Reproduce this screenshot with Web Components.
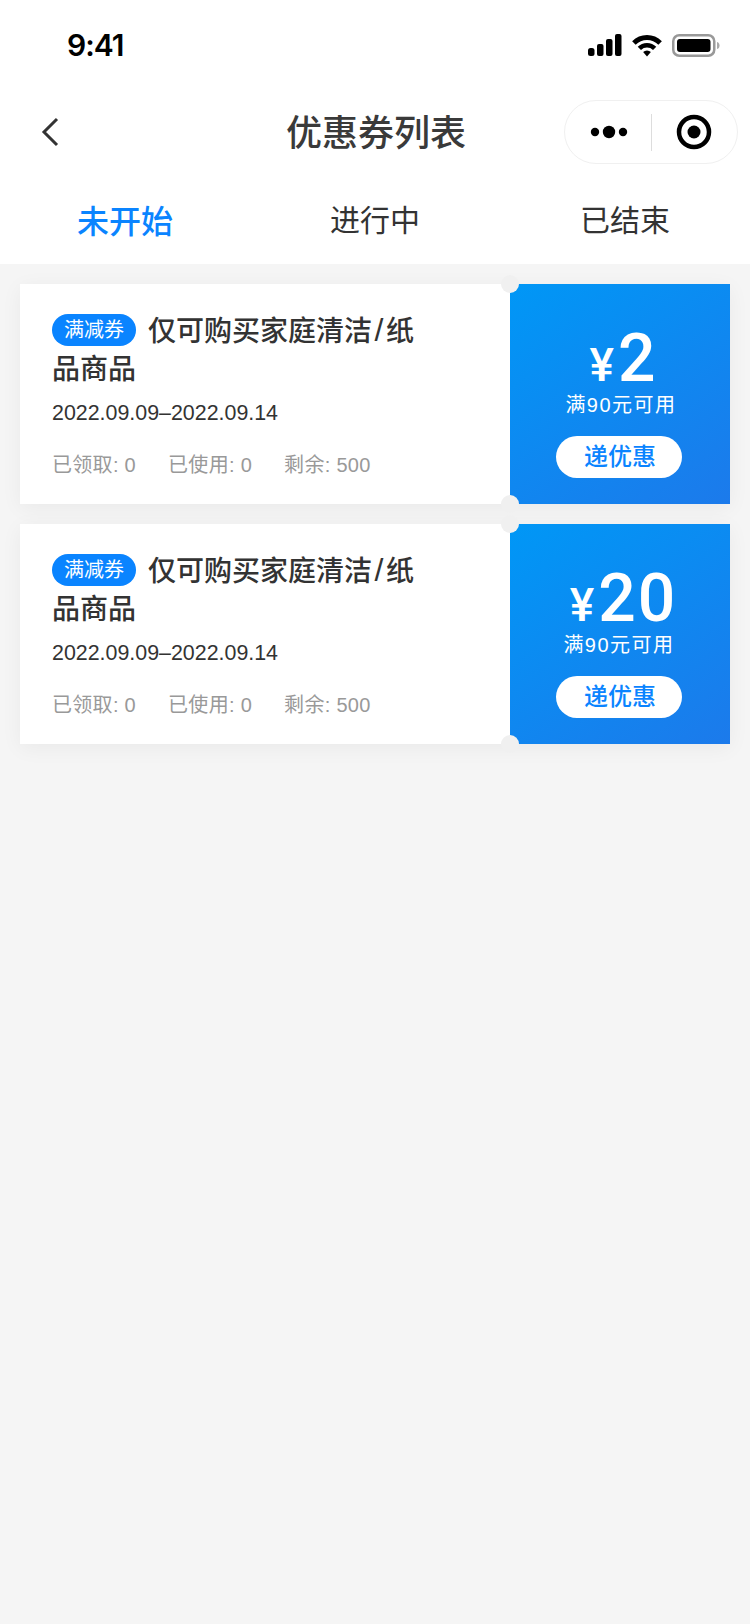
<!DOCTYPE html>
<html lang="zh">
<head>
<meta charset="utf-8">
<title>优惠券列表</title>
<style>
    html, body {
        margin: 0;
        background: #f5f5f5;
    }
    body {
        font-family: "Liberation Sans", "Noto Sans CJK SC", sans-serif;
        color: #333;
    }
    .slash {
        font-size: 32px;
        line-height: 0;
        padding: 0 2.5px;
    }
</style>
</head>
<body>
<coupon-page>
    <status-bar time="9:41"></status-bar>
    <nav-bar>优惠券列表</nav-bar>
    <tab-bar>
        <tab-item active>未开始</tab-item>
        <tab-item>进行中</tab-item>
        <tab-item>已结束</tab-item>
    </tab-bar>
    <coupon-list>
        <coupon-card tag="满减券" date="2022.09.09–2022.09.14" amount="2" rule="满90元可用" received="0" used="0" left="500">仅可购买家庭清洁<span class="slash">/</span>纸品商品</coupon-card>
        <coupon-card tag="满减券" date="2022.09.09–2022.09.14" amount="20" rule="满90元可用" received="0" used="0" left="500" shift="-4">仅可购买家庭清洁<span class="slash">/</span>纸品商品</coupon-card>
    </coupon-list>
</coupon-page>

<script>
class CouponPage extends HTMLElement {
    constructor() {
        super();
        this.attachShadow({ mode: 'open' });
        this.shadowRoot.innerHTML = `
            <style>
                :host {
                    display: flex;
                    flex-direction: column;
                    min-height: 1624px;
                    background: #f5f5f5;
                }
            </style>
            <slot></slot>
        `;
    }
}

class StatusBar extends HTMLElement {
    constructor() {
        super();
        this.attachShadow({ mode: 'open' });
        this.shadowRoot.innerHTML = `
            <style>
                :host {
                    display: flex;
                    justify-content: space-between;
                    align-items: center;
                    height: 88px;
                    padding: 2px 30px 0 67px;
                    box-sizing: border-box;
                    background: #fff;
                }
                .time {
                    font: 600 30px/1 Inter, sans-serif;
                    letter-spacing: -1px;
                    color: #000;
                }
                .icons {
                    display: flex;
                    align-items: center;
                    gap: 10px;
                }
                svg { display: block; }
            </style>
            <span class="time">${this.getAttribute('time')}</span>
            <div class="icons">
                <svg width="34" height="22" viewBox="0 0 34 22" fill="#000">
                    <rect x="0" y="14" width="6.5" height="8" rx="2.5"/>
                    <rect x="9" y="10" width="6.5" height="12" rx="2"/>
                    <rect x="18" y="5" width="6.5" height="17" rx="2"/>
                    <rect x="27" y="0" width="6.5" height="22" rx="2"/>
                </svg>
                <svg width="30" height="23" viewBox="0 0 30 23" fill="none" stroke="#000">
                    <path d="M1.9 8.9 A18.5 18.5 0 0 1 28.1 8.9" stroke-width="5"/>
                    <path d="M7.36 14.36 A10.8 10.8 0 0 1 22.64 14.36" stroke-width="4.6"/>
                    <path d="M15 22.5 L11.11 18.11 A5.5 5.5 0 0 1 18.89 18.11 Z" fill="#000" stroke="none"/>
                </svg>
                <svg width="48" height="23" viewBox="0 0 48 23">
                    <rect x="1.25" y="1.25" width="41" height="20.5" rx="6" fill="none" stroke="#999" stroke-width="2.5"/>
                    <rect x="5" y="5" width="33.5" height="13" rx="3" fill="#000"/>
                    <path d="M45 8 C47 8.500 47.500 10 47.500 11.500 C47.500 13 47 14.500 45 15 Z" fill="#aaa"/>
                </svg>
            </div>
        `;
    }
}

class NavBar extends HTMLElement {
    constructor() {
        super();
        this.attachShadow({ mode: 'open' });
        this.shadowRoot.innerHTML = `
            <style>
                :host {
                    display: grid;
                    grid-template-columns: 174px 1fr 174px;
                    align-items: center;
                    justify-items: center;
                    height: 88px;
                    padding: 0 12px;
                    box-sizing: border-box;
                    background: #fff;
                }
                .title {
                    font: 500 36px/1.2 "Noto Sans CJK SC", sans-serif;
                    color: #3a3a3a;
                    position: relative;
                    top: -1px;
                    left: 1px;
                }
                .back { justify-self: start; margin-left: 28px; }
                .capsule {
                    justify-self: end;
                    display: flex;
                    align-items: center;
                    width: 174px;
                    height: 64px;
                    box-sizing: border-box;
                    border: 1px solid #f0f0f0;
                    border-radius: 32px;
                }
                .capsule > div {
                    flex: 1;
                    display: flex;
                    justify-content: center;
                    align-items: center;
                }
                .more { border-right: 1px solid #ddd; height: 37px; }
                .more svg { margin-left: 3px; }
                svg { display: block; }
            </style>
            <svg class="back" width="20" height="30" viewBox="0 0 20 30" fill="none" stroke="#333" stroke-width="3">
                <path d="M17 2 L4 15 L17 28"/>
            </svg>
            <span class="title"><slot></slot></span>
            <div class="capsule">
                <div class="more">
                    <svg width="40" height="14" viewBox="0 0 40 14" fill="#000">
                        <circle cx="6" cy="7" r="4.200"/>
                        <circle cx="20" cy="7" r="6.200"/>
                        <circle cx="34" cy="7" r="4.200"/>
                    </svg>
                </div>
                <div>
                    <svg width="36" height="36" viewBox="0 0 36 36">
                        <circle cx="18" cy="18" r="15" fill="none" stroke="#000" stroke-width="4.500"/>
                        <circle cx="18" cy="18" r="6.500" fill="#000"/>
                    </svg>
                </div>
            </div>
        `;
    }
}

class TabBar extends HTMLElement {
    constructor() {
        super();
        this.attachShadow({ mode: 'open' });
        this.shadowRoot.innerHTML = `
            <style>
                :host {
                    display: grid;
                    grid-template-columns: repeat(3, 1fr);
                    height: 88px;
                    background: #fff;
                }
            </style>
            <slot></slot>
        `;
    }
}

class TabItem extends HTMLElement {
    constructor() {
        super();
        this.attachShadow({ mode: 'open' });
        this.shadowRoot.innerHTML = `
            <style>
                :host {
                    display: flex;
                    justify-content: center;
                    align-items: center;
                    padding-bottom: 4px;
                    font: 30px/1.2 "Noto Sans CJK SC", sans-serif;
                    color: #333;
                }
                :host([active]) {
                    padding-bottom: 2px;
                    font-size: 32px;
                    font-weight: 500;
                    color: #0a84ff;
                }
            </style>
            <slot></slot>
        `;
    }
}

class CouponList extends HTMLElement {
    constructor() {
        super();
        this.attachShadow({ mode: 'open' });
        this.shadowRoot.innerHTML = `
            <style>
                :host {
                    display: flex;
                    flex-direction: column;
                    gap: 20px;
                    padding: 20px;
                }
            </style>
            <slot></slot>
        `;
    }
}

class CouponCard extends HTMLElement {
    constructor() {
        super();
        this.attachShadow({ mode: 'open' });
        const attr = name => this.getAttribute(name);
        this.shadowRoot.innerHTML = `
            <style>
                :host {
                    display: grid;
                    grid-template-columns: 490px 220px;
                    height: 220px;
                    position: relative;
                    box-shadow: 0 4px 20px rgba(0, 0, 0, 0.05);
                    font-family: "Liberation Sans", "Noto Sans CJK SC", sans-serif;
                }
                .info {
                    background: #fff;
                    padding: 27px 90px 0 32px;
                }
                .name {
                    font-size: 28px;
                    font-weight: 500;
                    line-height: 38px;
                    color: #333;
                    padding-top: 2px;
                }
                .tag {
                    display: inline-block;
                    width: 84px;
                    height: 32px;
                    margin-right: 12px;
                    border-radius: 16px;
                    background: #0a84ff;
                    color: #fff;
                    font-size: 20px;
                    font-weight: 400;
                    line-height: 32px;
                    text-align: center;
                    vertical-align: 4px;
                    letter-spacing: 0;
                }
                .date {
                    margin-top: 9px;
                    font-size: 21.4px;
                    line-height: 30px;
                    color: #333;
                }
                .stats {
                    display: flex;
                    gap: 32px;
                    margin-top: 23px;
                    font-size: 20px;
                    line-height: 28px;
                    letter-spacing: 0.3px;
                    color: #999;
                }
                .value {
                    background: linear-gradient(145deg, #0097f6, #1c7aeb);
                    color: #fff;
                    display: flex;
                    flex-direction: column;
                    align-items: center;
                    padding-top: 42px;
                    box-sizing: border-box;
                }
                .price {
                    display: flex;
                    align-items: baseline;
                    gap: 4px;
                    height: 66px;
                    line-height: 66px;
                    font-family: Roboto, sans-serif;
                    font-weight: 500;
                    font-size: 66px;
                    letter-spacing: 2px;
                    margin-left: 7px;
                }
                .price small { font-size: 46px; letter-spacing: 0; }
                .rule {
                    margin-top: -2px;
                    margin-left: 2px;
                    font-size: 20px;
                    line-height: 30px;
                    letter-spacing: 1.5px;
                }
                .send {
                    width: 126px;
                    height: 42px;
                    margin: 16px 2px 0 0;
                    border-radius: 21px;
                    background: #fff;
                    color: #0a84ff;
                    font-size: 24px;
                    font-weight: 500;
                    line-height: 42px;
                    text-align: center;
                    text-indent: 2px;
                }
                .notch {
                    position: absolute;
                    left: 481px;
                    width: 18px;
                    height: 18px;
                    border-radius: 50%;
                    background: #f0f0f0;
                }
                .notch.top { top: -9px; }
                .notch.bottom { bottom: -9px; }
            </style>
            <div class="info">
                <div class="name"><span class="tag">${attr('tag')}</span><slot></slot></div>
                <div class="date">${attr('date')}</div>
                <div class="stats">
                    <span>已领取: ${attr('received')}</span>
                    <span>已使用: ${attr('used')}</span>
                    <span>剩余: ${attr('left')}</span>
                </div>
            </div>
            <div class="value">
                <div class="price"><small>¥</small><span>${attr('amount')}</span></div>
                <div class="rule" style="margin-right: ${-(attr('shift') || 0)}px">${attr('rule')}</div>
                <div class="send">递优惠</div>
            </div>
            <i class="notch top"></i>
            <i class="notch bottom"></i>
        `;
    }
}

customElements.define('coupon-page', CouponPage);
customElements.define('status-bar', StatusBar);
customElements.define('nav-bar', NavBar);
customElements.define('tab-bar', TabBar);
customElements.define('tab-item', TabItem);
customElements.define('coupon-list', CouponList);
customElements.define('coupon-card', CouponCard);
</script>
</body>
</html>
